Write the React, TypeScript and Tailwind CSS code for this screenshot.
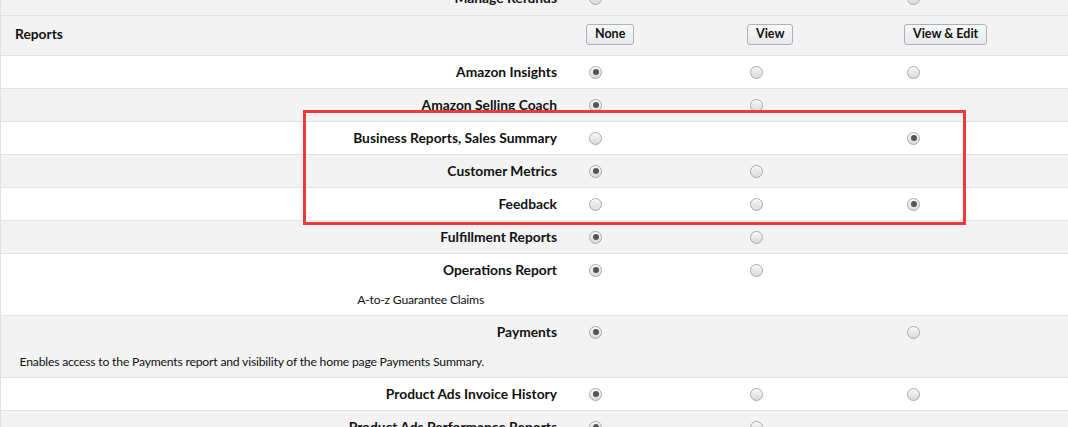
import React from "react";

type Perm = "none" | "view" | "edit";

type Row = {
  label: string;
  opts: Perm[];
  value: Perm;
  sub?: string;
};

const rows: Row[] = [
  { label: "Amazon Insights", opts: ["none", "view", "edit"], value: "none" },
  { label: "Amazon Selling Coach", opts: ["none", "view"], value: "none" },
  { label: "Business Reports, Sales Summary", opts: ["none", "edit"], value: "edit" },
  { label: "Customer Metrics", opts: ["none", "view"], value: "none" },
  { label: "Feedback", opts: ["none", "view", "edit"], value: "edit" },
  { label: "Fulfillment Reports", opts: ["none", "view"], value: "none" },
  { label: "Operations Report", opts: ["none", "view"], value: "none", sub: "A-to-z Guarantee Claims" },
  {
    label: "Payments",
    opts: ["none", "edit"],
    value: "none",
    sub: "Enables access to the Payments report and visibility of the home page Payments Summary.",
  },
  { label: "Product Ads Invoice History", opts: ["none", "view", "edit"], value: "none" },
  { label: "Product Ads Performance Reports", opts: ["none", "view"], value: "none" },
];

const cols: Perm[] = ["none", "view", "edit"];

function Radio({ checked }: { checked: boolean }) {
  return (
    <span className="ml-[3px] flex h-[13px] w-[13px] items-center justify-center rounded-full border border-[#a9a9a9] bg-gradient-to-b from-[#f6f6f6] to-[#dadada] shadow-[inset_0_1px_1px_rgba(255,255,255,0.8)]">
      {checked && <span className="h-[6px] w-[6px] rounded-full bg-[#555]" />}
    </span>
  );
}

function Btn({ children }: { children: React.ReactNode }) {
  return (
    <button className="h-[21px] rounded-[3px] border border-[#adb1b8] bg-gradient-to-b from-[#f7f8fa] to-[#e7e9ec] px-[8px] text-[12.5px] font-bold leading-none text-[#111]">
      {children}
    </button>
  );
}

function PermRow({ row, shade }: { row: Row; shade: boolean }) {
  return (
    <div className={`grid grid-cols-[585px_161px_157px_1fr] border-b border-[#e3e3e3] ${shade ? "bg-[#f3f3f3]" : "bg-white"}`}>
      <div className="flex h-[32px] items-center justify-end whitespace-nowrap pr-[29px] text-[13.8px] font-bold text-[#111]">
        {row.label}
      </div>
      {cols.map((c) => (
        <div key={c} className="flex h-[32px] items-center">
          {row.opts.includes(c) && <Radio checked={row.value === c} />}
        </div>
      ))}
      {row.sub && (
        <div className="flex h-[29px] items-start justify-end whitespace-nowrap pr-[102px] pt-[5px] text-[12.2px] tracking-[-0.2px] text-[#111]">
          {row.sub}
        </div>
      )}
    </div>
  );
}

export default function App() {
  return (
    <div className="h-[427px] w-[1068px] overflow-hidden bg-white font-['Lato','Noto_Sans',sans-serif]">
      <div className="relative -mt-[18px] border-l border-[#e0e0e0]">
        {/* partial row above */}
        <div className="grid grid-cols-[585px_161px_157px_1fr] border-b border-[#e3e3e3] bg-[#f3f3f3]">
          <div className="flex h-[33px] items-center justify-end pr-[29px] text-[13.8px] font-bold text-[#111]">
            Manage Refunds
          </div>
          <div className="flex h-[33px] items-center">
            <Radio checked={false} />
          </div>
          <div />
          <div className="flex h-[33px] items-center">
            <Radio checked={false} />
          </div>
        </div>

        {/* section header */}
        <div className="grid grid-cols-[585px_161px_157px_1fr] border-b border-[#e3e3e3] bg-[#f3f3f3]">
          <div className="flex h-[39px] items-center pb-[3px] pl-[14px] text-[13.8px] font-bold text-[#111]">Reports</div>
          <div className="flex h-[39px] items-center pb-[3px]">
            <Btn>None</Btn>
          </div>
          <div className="flex h-[39px] items-center pb-[3px]">
            <Btn>View</Btn>
          </div>
          <div className="flex h-[39px] items-center pb-[3px]">
            <Btn>View &amp; Edit</Btn>
          </div>
        </div>

        {rows.map((r, i) => (
          <PermRow key={r.label} row={r} shade={i % 2 === 1} />
        ))}

        {/* highlight */}
        <div className="pointer-events-none absolute left-[302px] top-[128px] h-[115px] w-[663px] border-[3px] border-[#ee3a3a]" />
      </div>
    </div>
  );
}
